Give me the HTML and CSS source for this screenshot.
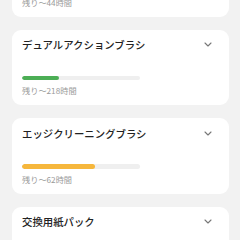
FILE: index.html
```html
<!DOCTYPE html>
<html lang="ja">
<head>
<meta charset="utf-8">
<link rel="stylesheet" href="styles.css">
</head>
<body>
<div class="list">
  <div class="card">
    <div class="head"><span class="title">メインブラシ</span><svg class="chev" viewBox="0 0 8 5"><path d="M1 1l3 3 3-3"/></svg></div>
    <div class="track"><div class="fill orange" style="width:15%"></div></div>
    <div class="sub">残り〜44時間</div>
  </div>
  <div class="card">
    <div class="head"><span class="title">デュアルアクションブラシ</span><svg class="chev" viewBox="0 0 8 5"><path d="M1 1l3 3 3-3"/></svg></div>
    <div class="track"><div class="fill green" style="width:31%"></div></div>
    <div class="sub">残り〜218時間</div>
  </div>
  <div class="card">
    <div class="head"><span class="title">エッジクリーニングブラシ</span><svg class="chev" viewBox="0 0 8 5"><path d="M1 1l3 3 3-3"/></svg></div>
    <div class="track"><div class="fill orange" style="width:62%"></div></div>
    <div class="sub">残り〜62時間</div>
  </div>
  <div class="card">
    <div class="head"><span class="title">交換用紙パック</span><svg class="chev" viewBox="0 0 8 5"><path d="M1 1l3 3 3-3"/></svg></div>
    <div class="track"><div class="fill green" style="width:80%"></div></div>
    <div class="sub">残り〜300時間</div>
  </div>
</div>
</body>
</html>
```
FILE: styles.css
```css
html, body {
  margin: 0;
  padding: 0;
  background: #f2f2f2;
  font-family: "Noto Sans CJK JP", "Noto Sans", sans-serif;
  overflow: hidden;
}
.list {
  display: flex;
  flex-direction: column;
  gap: 13px;
  margin: -59px 11px 0 12px;
}
.card {
  background: #fff;
  border-radius: 9px;
  padding: 0 10px 10px 10px;
  display: flex;
  flex-direction: column;
}
.head {
  height: 30px;
  display: flex;
  align-items: center;
  justify-content: space-between;
}
.title {
  font-size: 10.4px;
  font-weight: 500;
  color: #222;
}
.chev {
  width: 8px;
  height: 5px;
  margin-right: 7px;
  fill: none;
  stroke: #777;
  stroke-width: 1.1;
  stroke-linecap: round;
  stroke-linejoin: round;
}
.track {
  margin-top: 16px;
  width: 60%;
  height: 4.5px;
  border-radius: 3px;
  background: #efefef;
  overflow: hidden;
}
.fill {
  height: 100%;
  border-radius: 3px;
}
.green { background: #4cae55; }
.orange { background: #f6b73c; }
.sub {
  margin-top: 5px;
  font-size: 8.2px;
  line-height: 10px;
  color: #9a9a9a;
}
```
